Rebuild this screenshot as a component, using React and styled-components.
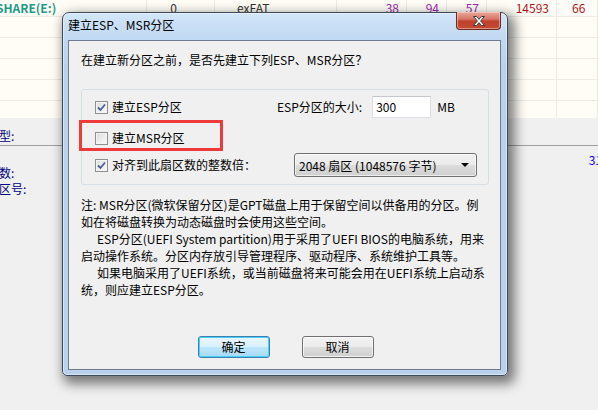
import React from 'react';
import styled, { createGlobalStyle } from 'styled-components';

const Global = createGlobalStyle`
  html, body { margin: 0; padding: 0; }
  body {
    width: 598px; height: 410px; overflow: hidden; background: #f0f0f0;
    font-family: "Noto Sans CJK SC", "Noto Sans", sans-serif; font-size: 12px; color: #000;
  }
`;

const Page = styled.div`
  position: relative; width: 598px; height: 410px; overflow: hidden; background: #f0f0f0;
`;

/* ---------- background application ---------- */
const Table = styled.div`
  height: 118px; background: #fffdf6; display: flex; flex-direction: column; overflow: hidden;
`;
const TRow = styled.div`
  display: grid;
  grid-template-columns: 147px 68px 122px 70px 40px 40px 70px 1fr;
  height: ${p => p.$h}px; box-sizing: border-box; flex: none;
  border-bottom: ${p => (p.$last ? 'none' : '1px solid #ecebe6')};
`;
const TCell = styled.div`
  border-right: 1px solid #ecebe6;
  display: flex; align-items: center; white-space: nowrap; overflow: hidden;
  justify-content: ${p => (p.$right ? 'flex-end' : 'flex-start')};
  padding: 0 ${p => p.$pr || 0}px 0 ${p => p.$pl || 0}px;
  color: ${p => p.$c || '#333'}; font-weight: ${p => (p.$bold ? 700 : 400)};
  font-size: 12px; line-height: 16px;
`;
const Lower = styled.div` display: flex; flex-direction: column; `;
const TypeRow = styled.div`
  height: 28px; box-sizing: border-box; padding-top: 10px; border-bottom: 1px solid #a0a0a0;
`;
const NavyLabel = styled.div`
  color: #000080; line-height: 16px; margin-left: -1px; white-space: nowrap;
`;
const DetailRow = styled.div` display: flex; justify-content: space-between; `;
const DetailLabels = styled.div` padding-top: 19px; `;
const DetailValue = styled.div`
  color: #0000ff; line-height: 16px; margin-top: 6px; margin-right: -4px;
`;

/* ---------- dialog window ---------- */
const Window = styled.div`
  position: absolute; left: 62px; top: 12px; width: 446px; height: 364px; box-sizing: border-box;
  border: 1px solid #3d4a5b; border-radius: 7px 7px 5px 5px;
  background: linear-gradient(#d3e6f9 0px, #c0d8f1 26px, #b9d1ea 60px, #b9d1ea);
  box-shadow: 4px 5px 12px 3px rgba(0, 0, 0, 0.5), inset 0 0 0 1px rgba(255,255,255,0.45);
  display: flex; flex-direction: column; padding: 0 6px 5px 5px;
`;
const TitleBar = styled.div`
  height: 27px; flex: none; display: flex; align-items: flex-start;
`;
const Title = styled.div`
  line-height: 18px; margin-top: 3px; color: #000; white-space: nowrap;
`;
const CloseButton = styled.div`
  margin-left: auto; margin-top: -1px; width: 45px; height: 18px; box-sizing: border-box;
  border: 1px solid #6b2a22; border-top: none; border-radius: 0 0 4px 4px;
  background: linear-gradient(#e9a99b 0%, #d8796a 40%, #c0412d 55%, #c34a33 100%);
  box-shadow: inset 0 0 0 1px rgba(255, 220, 210, 0.5);
  display: flex; align-items: center; justify-content: center;
`;
const Client = styled.div`
  flex: 1; border: 1px solid #6e7c8d; background: #f0f0f0;
  display: flex; flex-direction: column; padding: 0 11px 11px 12px;
`;
const Prompt = styled.div` margin-top: 10px; line-height: 18px; white-space: nowrap; `;

const Group = styled.div`
  margin-top: 20px; height: 96px; box-sizing: border-box;
  border: 1px solid #d5dfe5; border-radius: 3px;
  padding: 6px 0 0 13px; display: flex; flex-direction: column;
`;
const GRow = styled.div`
  position: relative; display: flex; align-items: center;
  height: ${p => p.$h}px; margin-top: ${p => p.$mt || 0}px;
`;
const CheckWrap = styled.label`
  display: flex; align-items: center; gap: 4px; width: ${p => p.$w || 'auto'}; flex: none;
  white-space: nowrap; line-height: 16px;
`;
const Box = styled.span`
  width: 13px; height: 13px; box-sizing: border-box; flex: none;
  border: 1px solid #8e8f8f; background: linear-gradient(135deg, #dcdcdc, #fbfbfb);
  box-shadow: inset 0 0 0 1px #f4f4f4;
  display: flex; align-items: center; justify-content: center;
`;
const FieldLabel = styled.span` white-space: nowrap; line-height: 16px; `;
const TextBox = styled.div`
  width: 59px; height: 22px; box-sizing: border-box; margin-left: 10px;
  border: 1px solid #dadee4; border-top-color: #c4c8ce; background: #fff;
  padding-left: 3px; display: flex; align-items: center; line-height: 16px;
`;
const Unit = styled.span` margin-left: 6px; line-height: 16px; `;
const Select = styled.div`
  width: 183px; height: 24px; box-sizing: border-box;
  border: 1px solid #707070; border-radius: 3px;
  background: linear-gradient(#f2f2f2 0%, #ebebeb 50%, #dddddd 51%, #cfcfcf 100%);
  box-shadow: inset 0 0 0 1px rgba(255,255,255,0.6);
  display: flex; align-items: center; padding: 0 7px 0 4px; white-space: nowrap;
`;
const Arrow = styled.span`
  margin-left: auto; width: 0; height: 0;
  border-left: 4px solid transparent; border-right: 4px solid transparent; border-top: 4px solid #000;
`;
const Annotation = styled.div`
  position: absolute; left: -16px; top: -7px; width: 144px; height: 31px; box-sizing: border-box;
  border: 3px solid #ee3a3a; pointer-events: none;
`;

const Notes = styled.div` margin-top: 11px; line-height: 17px; `;
const NoteLine = styled.div`
  white-space: nowrap; padding-left: ${p => (p.$indent ? 16 : 0)}px;
`;

const Buttons = styled.div`
  margin-top: auto; display: flex; justify-content: center; gap: 32px; padding-left: 1px;
`;
const Button = styled.button`
  width: 72px; height: 22px; box-sizing: border-box; padding: 0; margin: 0;
  font-family: inherit; font-size: 12px; color: #000; line-height: 16px;
  border-radius: 3px;
  border: 1px solid ${p => (p.$default ? '#3c7fb1' : '#707070')};
  background: ${p => (p.$default
    ? 'linear-gradient(#eaf6fd 0%, #d9f0fc 50%, #bee6fd 51%, #a7d9f5 100%)'
    : 'linear-gradient(#f2f2f2 0%, #ebebeb 50%, #dddddd 51%, #cfcfcf 100%)')};
  box-shadow: ${p => (p.$default ? 'inset 0 0 0 1px #48d2fb' : 'inset 0 0 0 1px rgba(255,255,255,0.7)')};
`;

const CheckMark = () => (
  <svg width="9" height="9" viewBox="0 0 9 9">
    <path d="M1 4.5 L3.5 7 L8 1.5" fill="none" stroke="#4a5f97" strokeWidth="1.8" />
  </svg>
);

const Checkbox = ({ checked, children, w }) => (
  <CheckWrap $w={w}>
    <Box>{checked && <CheckMark />}</Box>
    <span>{children}</span>
  </CheckWrap>
);

const rows = [17, 21, 21, 21, 21, 17];

export default function App() {
  return (
    <Page>
      <Global />
      <Table>
        {rows.map((h, i) => (
          <TRow key={i} $h={h} $last={i === rows.length - 1}>
            {i === 0 ? (
              <>
                <TCell $bold $c="#1d9a8a" $pl={0}><span style={{ marginLeft: -4 }}>SHARE(E:)</span></TCell>
                <TCell $right $pr={37}>0</TCell>
                <TCell $pl={22}>exFAT</TCell>
                <TCell $right $pr={7} $c="#9a2aa8">38</TCell>
                <TCell $right $pr={7} $c="#9a2aa8">94</TCell>
                <TCell $right $pr={7} $c="#9a2aa8">57</TCell>
                <TCell $right $pr={7} $c="#b0141a">14593</TCell>
                <TCell $pl={15} $c="#b0141a">66</TCell>
              </>
            ) : (
              Array.from({ length: 8 }).map((_, j) => <TCell key={j} />)
            )}
          </TRow>
        ))}
      </Table>
      <Lower>
        <TypeRow><NavyLabel>型:</NavyLabel></TypeRow>
        <DetailRow>
          <DetailLabels>
            <NavyLabel>数:</NavyLabel>
            <NavyLabel>区号:</NavyLabel>
          </DetailLabels>
          <DetailValue>31</DetailValue>
        </DetailRow>
      </Lower>

      <Window>
        <TitleBar>
          <Title>建立ESP、MSR分区</Title>
          <CloseButton>
            <svg width="12" height="10" viewBox="0 0 12 10">
              <path d="M0.5 0.5 H3.5 L6 3.4 L8.5 0.5 H11.5 L7.6 5 L11.5 9.5 H8.5 L6 6.6 L3.5 9.5 H0.5 L4.4 5 Z"
                fill="#fff" stroke="#3b3b3b" strokeWidth="1" strokeLinejoin="round" />
            </svg>
          </CloseButton>
        </TitleBar>
        <Client>
          <Prompt>在建立新分区之前，是否先建立下列ESP、MSR分区？</Prompt>
          <Group>
            <GRow $h={22}>
              <Checkbox checked w="182px">建立ESP分区</Checkbox>
              <FieldLabel>ESP分区的大小:</FieldLabel>
              <TextBox>300</TextBox>
              <Unit>MB</Unit>
            </GRow>
            <GRow $h={22} $mt={9}>
              <Checkbox>建立MSR分区</Checkbox>
              <Annotation />
            </GRow>
            <GRow $h={24} $mt={4}>
              <Checkbox checked w="199px">对齐到此扇区数的整数倍：</Checkbox>
              <Select>
                <span>2048 扇区 (1048576 字节)</span>
                <Arrow />
              </Select>
            </GRow>
          </Group>
          <Notes>
            <NoteLine>注: MSR分区(微软保留分区)是GPT磁盘上用于保留空间以供备用的分区。例</NoteLine>
            <NoteLine>如在将磁盘转换为动态磁盘时会使用这些空间。</NoteLine>
            <NoteLine $indent>ESP分区(UEFI System partition)用于采用了UEFI BIOS的电脑系统，用来</NoteLine>
            <NoteLine>启动操作系统。分区内存放引导管理程序、驱动程序、系统维护工具等。</NoteLine>
            <NoteLine $indent>如果电脑采用了UEFI系统，或当前磁盘将来可能会用在UEFI系统上启动系</NoteLine>
            <NoteLine>统，则应建立ESP分区。</NoteLine>
          </Notes>
          <Buttons>
            <Button $default>确定</Button>
            <Button>取消</Button>
          </Buttons>
        </Client>
      </Window>
    </Page>
  );
}
